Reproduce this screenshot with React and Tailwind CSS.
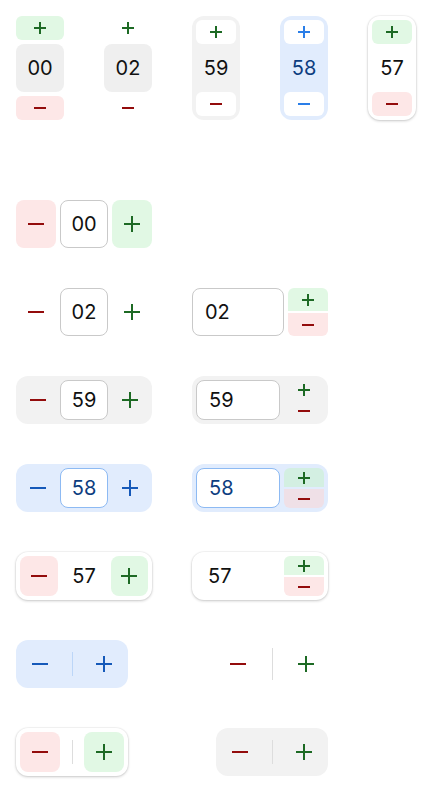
import React from 'react';

const GREEN = '#1d6a24';
const RED = '#930c0c';

// square-ended plus / minus glyphs
const Sign = ({ plus = false, size = 16, color = '#000', stroke = 2 }) => (
  <svg width={size} height={size} viewBox={`0 0 ${size} ${size}`} className="block">
    <rect x="0" y={(size - stroke) / 2} width={size} height={stroke} fill={color} />
    {plus && <rect x={(size - stroke) / 2} y="0" width={stroke} height={size} fill={color} />}
  </svg>
);

const Btn = ({ className = '', children }) => (
  <button className={`flex items-center justify-center ${className}`}>{children}</button>
);

const val = 'font-["Inter","Noto_Sans",sans-serif] text-[20px] leading-none text-[#111]';

const Vertical = ({ box, plusCls, minusCls, valueCls, value, plusColor = GREEN, minusColor = RED, valueText = '' }) => (
  <div className={`flex w-12 flex-col ${box}`}>
    <Btn className={`h-6 rounded-md ${plusCls}`}><Sign plus size={12} color={plusColor} /></Btn>
    <div className={`flex h-12 items-center justify-center ${valueCls}`}>
      <span className={`${val} ${valueText}`}>{value}</span>
    </div>
    <Btn className={`h-6 rounded-md ${minusCls}`}><Sign size={12} color={minusColor} /></Btn>
  </div>
);

const Stack = ({ plusCls = '', minusCls = '', h = 'h-[19px]' }) => (
  <div className="flex w-10 flex-col gap-[2px]">
    <Btn className={`${h} rounded-t-md ${plusCls}`}><Sign plus size={12} color={GREEN} /></Btn>
    <Btn className={`${h} rounded-b-md ${minusCls}`}><Sign size={12} color={RED} /></Btn>
  </div>
);

export default function App() {
  return (
    <div className="min-h-screen bg-white p-4">
      {/* vertical steppers */}
      <div className="flex gap-10">
        <Vertical box="gap-1" plusCls="bg-[#e1f8e4]" minusCls="bg-[#fde7e7]" valueCls="rounded-lg bg-[#efefef]" value="00" />
        <Vertical box="gap-1" plusCls="" minusCls="" valueCls="rounded-lg bg-[#efefef]" value="02" />
        <Vertical box="rounded-xl bg-[#f2f2f2] p-1 w-12" plusCls="bg-white" minusCls="bg-white" valueCls="" value="59" />
        <Vertical
          box="rounded-xl bg-[#e1ecfd] p-1"
          plusCls="bg-white"
          minusCls="bg-white"
          valueCls=""
          value="58"
          plusColor="#2a7ee8"
          minusColor="#2a7ee8"
          valueText="!text-[#0d3d80]"
        />
        <Vertical
          box="rounded-xl bg-white p-1 shadow-[0_1px_3px_rgba(0,0,0,0.2),0_0_0_1px_rgba(0,0,0,0.03)]"
          plusCls="bg-[#e1f8e4]"
          minusCls="bg-[#fde7e7]"
          valueCls=""
          value="57"
        />
      </div>

      {/* horizontal steppers */}
      <div className="mt-20 grid grid-cols-[136px_136px] gap-x-10 gap-y-10">
        {/* row 1 */}
        <div className="flex gap-1">
          <Btn className="h-12 w-10 rounded-lg bg-[#fde7e7]"><Sign color={RED} /></Btn>
          <div className="flex h-12 w-12 items-center justify-center rounded-lg border border-[#c9c9c9] bg-white">
            <span className={val}>00</span>
          </div>
          <Btn className="h-12 w-10 rounded-lg bg-[#e1f8e4]"><Sign plus color={GREEN} /></Btn>
        </div>
        <div />

        {/* row 2 */}
        <div className="flex gap-1">
          <Btn className="h-12 w-10"><Sign color={RED} /></Btn>
          <div className="flex h-12 w-12 items-center justify-center rounded-lg border border-[#c9c9c9] bg-white">
            <span className={val}>02</span>
          </div>
          <Btn className="h-12 w-10"><Sign plus color={GREEN} /></Btn>
        </div>
        <div className="flex gap-1">
          <div className="flex h-12 w-[92px] items-center rounded-lg border border-[#c9c9c9] bg-white pl-3">
            <span className={val}>02</span>
          </div>
          <Stack h="h-[23px]" plusCls="bg-[#e1f8e4]" minusCls="bg-[#fde7e7]" />
        </div>

        {/* row 3 */}
        <div className="flex gap-1 rounded-xl bg-[#f2f2f2] p-1">
          <Btn className="h-10 w-9"><Sign color={RED} /></Btn>
          <div className="flex h-10 w-12 items-center justify-center rounded-lg border border-[#c9c9c9] bg-white">
            <span className={val}>59</span>
          </div>
          <Btn className="h-10 w-9"><Sign plus color={GREEN} /></Btn>
        </div>
        <div className="flex gap-1 rounded-xl bg-[#f2f2f2] p-1">
          <div className="flex h-10 w-[84px] items-center rounded-lg border border-[#c9c9c9] bg-white pl-3">
            <span className={val}>59</span>
          </div>
          <Stack />
        </div>

        {/* row 4 */}
        <div className="flex gap-1 rounded-xl bg-[#e1ecfd] p-1">
          <Btn className="h-10 w-9"><Sign color="#1559b9" /></Btn>
          <div className="flex h-10 w-12 items-center justify-center rounded-lg border border-[#8dbaf3] bg-white">
            <span className={`${val} !text-[#0d3d80]`}>58</span>
          </div>
          <Btn className="h-10 w-9"><Sign plus color="#1559b9" /></Btn>
        </div>
        <div className="flex gap-1 rounded-xl bg-[#e1ecfd] p-1">
          <div className="flex h-10 w-[84px] items-center rounded-lg border border-[#8dbaf3] bg-white pl-3">
            <span className={`${val} !text-[#0d3d80]`}>58</span>
          </div>
          <Stack plusCls="bg-[#d3efe2]" minusCls="bg-[#efe0e7]" />
        </div>

        {/* row 5 */}
        <div className="flex gap-1 rounded-xl bg-white p-1 shadow-[0_1px_3px_rgba(0,0,0,0.2),0_0_0_1px_rgba(0,0,0,0.03)]">
          <Btn className="h-10 w-10 rounded-lg bg-[#fde7e7]"><Sign color={RED} /></Btn>
          <div className="flex h-10 w-12 items-center justify-center">
            <span className={val}>57</span>
          </div>
          <Btn className="h-10 w-10 rounded-lg bg-[#e1f8e4]"><Sign plus color={GREEN} /></Btn>
        </div>
        <div className="flex gap-1 rounded-xl bg-white p-1 shadow-[0_1px_3px_rgba(0,0,0,0.2),0_0_0_1px_rgba(0,0,0,0.03)]">
          <div className="flex h-10 w-[84px] items-center pl-3">
            <span className={val}>57</span>
          </div>
          <Stack plusCls="bg-[#e1f8e4]" minusCls="bg-[#fde7e7]" />
        </div>

        {/* row 6 */}
        <div className="flex h-12 w-28 items-center justify-between rounded-xl bg-[#e1ecfd]">
          <Btn className="h-12 w-12"><Sign color="#1559b9" /></Btn>
          <div className="h-6 w-px bg-[#bcd6f8]" />
          <Btn className="h-12 w-12"><Sign plus color="#1559b9" /></Btn>
        </div>
        <div className="ml-6 flex h-12 w-28 items-center justify-between">
          <Btn className="h-12 w-11"><Sign color={RED} /></Btn>
          <div className="h-8 w-px bg-[#dddddd]" />
          <Btn className="h-12 w-11"><Sign plus color={GREEN} /></Btn>
        </div>

        {/* row 7 */}
        <div className="flex w-28 items-center justify-between rounded-xl bg-white p-1 shadow-[0_1px_3px_rgba(0,0,0,0.2),0_0_0_1px_rgba(0,0,0,0.03)]">
          <Btn className="h-10 w-10 rounded-lg bg-[#fde7e7]"><Sign color={RED} /></Btn>
          <div className="h-6 w-px bg-[#dddddd]" />
          <Btn className="h-10 w-10 rounded-lg bg-[#e1f8e4]"><Sign plus color={GREEN} /></Btn>
        </div>
        <div className="ml-6 flex w-28 items-center justify-between rounded-xl bg-[#f2f2f2] p-1">
          <Btn className="h-10 w-10"><Sign color={RED} /></Btn>
          <div className="h-6 w-px bg-[#dddddd]" />
          <Btn className="h-10 w-10"><Sign plus color={GREEN} /></Btn>
        </div>
      </div>
    </div>
  );
}
